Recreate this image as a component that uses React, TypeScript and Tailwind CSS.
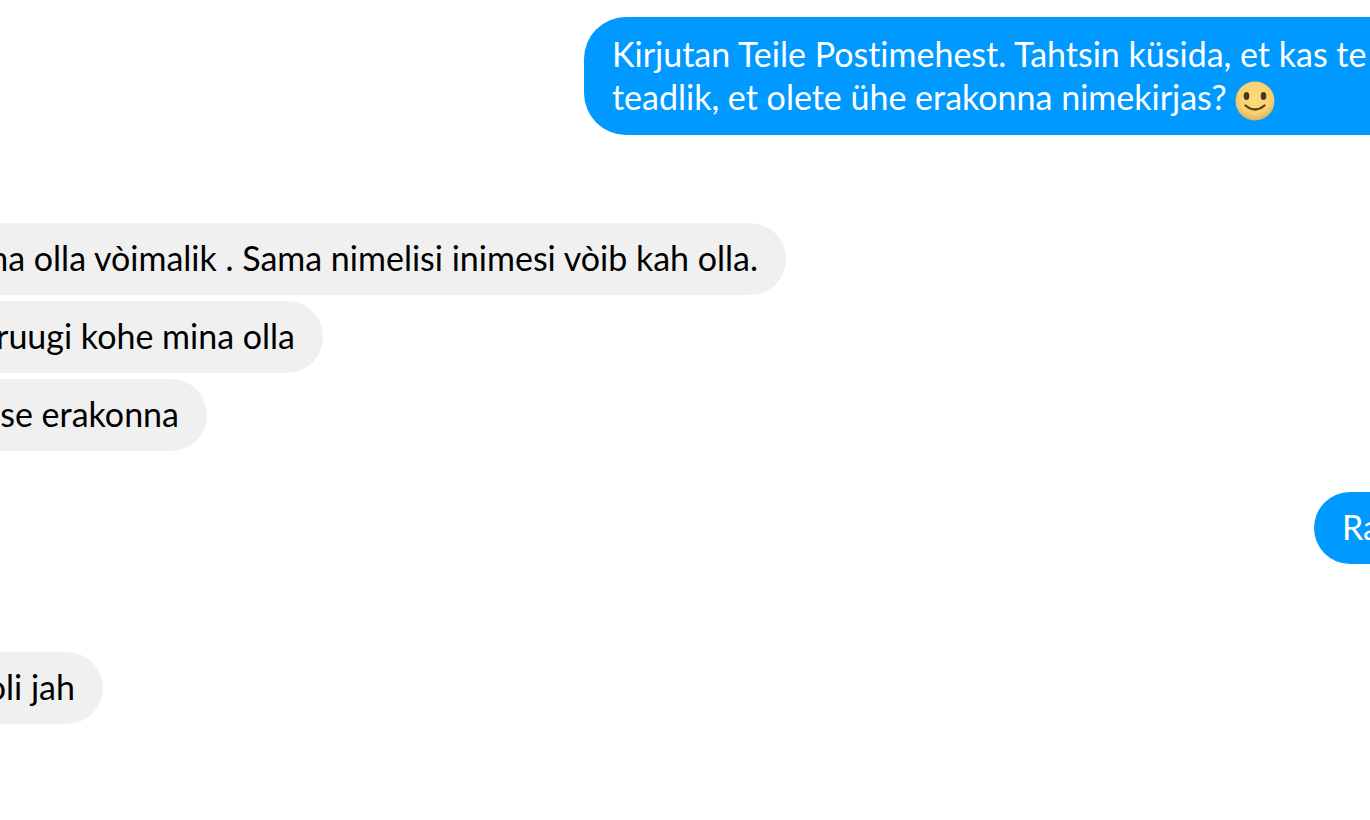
import React from 'react';

interface Message {
  id: number;
  text: string;
  width: string;
}

const SmileIcon: React.FC = () => (
  <svg viewBox="0 0 40 40" className="inline-block size-10 -my-1 align-middle" role="img" aria-label="smile">
    <defs>
      <radialGradient id="face" cx="50%" cy="40%" r="60%">
        <stop offset="0%" stopColor="#fddc80" />
        <stop offset="70%" stopColor="#fbd06c" />
        <stop offset="100%" stopColor="#dcb462" />
      </radialGradient>
    </defs>
    <circle cx="20" cy="20" r="19.5" fill="url(#face)" />
    <ellipse cx="11.5" cy="15" rx="2.8" ry="4" fill="#45381f" />
    <ellipse cx="28.5" cy="15" rx="2.8" ry="4" fill="#45381f" />
    <path d="M10.5 24.5 Q20 32.5 29.5 24.5" fill="none" stroke="#54421f" strokeWidth="2.2" strokeLinecap="round" />
  </svg>
);

// Long lines run out of the left edge, so the text hangs from the right
const Received: React.FC<{ message: Message }> = ({ message }) => (
  <div className={`${message.width} flex justify-end bg-[#f0f0f0] text-black pr-7 pt-3.5 pb-4 rounded-r-full overflow-hidden`}>
    <p>{message.text}</p>
  </div>
);

const answers: Message[] = [
  { id: 2, text: 'na olla vòimalik . Sama nimelisi inimesi vòib kah olla.', width: 'w-[786px]' },
  { id: 3, text: 'ruugi kohe mina olla', width: 'w-[323px]' },
  { id: 4, text: 'se erakonna', width: 'w-[207px]' },
];

const App: React.FC = () => {
  return (
    <main className="min-h-screen overflow-hidden bg-white pt-[17px] font-['Lato',sans-serif] [font-variant-ligatures:none] text-[34px] leading-[42px] whitespace-nowrap">
      <div className="flex justify-end">
        <div className="w-[786px] shrink-0 bg-[#0099ff] text-white pl-7 py-4 rounded-l-[42px] overflow-hidden">
          <p>Kirjutan Teile Postimehest. Tahtsin küsida, et kas te</p>
          <p className="leading-[44px]">teadlik, et olete ühe erakonna nimekirjas? <SmileIcon /></p>
        </div>
      </div>

      <div className="flex flex-col gap-[6px] mt-[88px]">
        {answers.map(m => <Received key={m.id} message={m} />)}
      </div>

      <div className="flex justify-end mt-[41px]">
        <div className="w-14 shrink-0 bg-[#0099ff] text-white pl-7 pt-3.5 pb-4 rounded-l-full overflow-hidden">
          <p>Ra</p>
        </div>
      </div>

      <div className="mt-[88px]">
        <Received message={{ id: 6, text: 'oli jah', width: 'w-[103px]' }} />
      </div>
    </main>
  );
};

export default App;
